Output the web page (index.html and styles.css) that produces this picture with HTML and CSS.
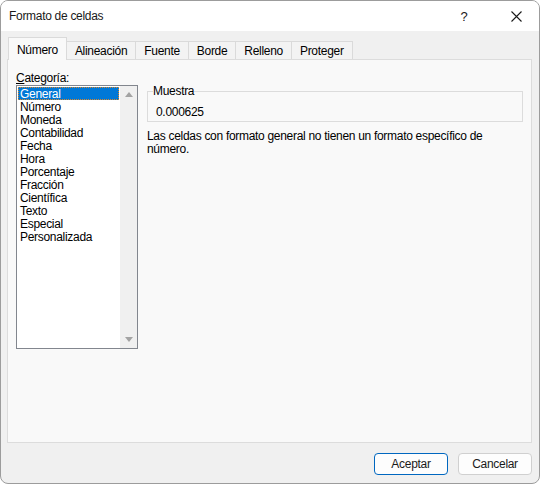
FILE: index.html
```html
<!DOCTYPE html>
<html lang="es">
<head>
<meta charset="utf-8">
<title>Formato de celdas</title>
<link rel="stylesheet" href="styles.css">
</head>
<body>
<div class="window">
  <div class="titlebar">
    <span class="title">Formato de celdas</span>
    <span class="help">?</span>
    <span class="close">
      <svg width="11" height="11" viewBox="0 0 11 11"><path d="M0.5 0.5L10.5 10.5M10.5 0.5L0.5 10.5" stroke="#1a1a1a" stroke-width="1.1" fill="none"/></svg>
    </span>
  </div>
  <div class="content">
    <div class="tabs">
      <div class="tab active">Número</div>
      <div class="tab">Alineación</div>
      <div class="tab">Fuente</div>
      <div class="tab">Borde</div>
      <div class="tab">Relleno</div>
      <div class="tab">Proteger</div>
    </div>
    <div class="panel">
      <div class="leftcol">
        <div class="label"><u>C</u>ategoría:</div>
        <div class="listbox">
          <ul class="items">
            <li class="item selected">General</li>
            <li class="item">Número</li>
            <li class="item">Moneda</li>
            <li class="item">Contabilidad</li>
            <li class="item">Fecha</li>
            <li class="item">Hora</li>
            <li class="item">Porcentaje</li>
            <li class="item">Fracción</li>
            <li class="item">Científica</li>
            <li class="item">Texto</li>
            <li class="item">Especial</li>
            <li class="item">Personalizada</li>
          </ul>
          <div class="scrollbar">
            <span class="arrow up"></span>
            <span class="arrow down"></span>
          </div>
        </div>
      </div>
      <div class="rightcol">
        <fieldset class="sample">
          <legend>Muestra</legend>
          <div class="value">0.000625</div>
        </fieldset>
        <p class="desc">Las celdas con formato general no tienen un formato específico de número.</p>
      </div>
    </div>
    <div class="buttons">
      <button class="btn primary">Aceptar</button>
      <button class="btn">Cancelar</button>
    </div>
  </div>
</div>
</body>
</html>
```

FILE: styles.css
```css
html, body {
  margin: 0;
  padding: 0;
  background: #ffffff;
}
body {
  font-family: "Liberation Sans", Arial, sans-serif;
  font-size: 12px;
  letter-spacing: -0.3px;
  color: #000;
}
.window {
  width: 540px;
  height: 484px;
  box-sizing: border-box;
  border: 1px solid #9c9c9c;
  border-radius: 8px;
  overflow: hidden;
  background: #f0f0f0;
  display: flex;
  flex-direction: column;
}
.titlebar {
  height: 30px;
  flex: none;
  background: #ffffff;
  display: flex;
  align-items: center;
  padding-left: 8px;
}
.title {
  flex: 1;
  color: #1a1a1a;
  font-size: 12px;
}
.help {
  width: 20px;
  text-align: center;
  font-size: 13px;
  color: #1a1a1a;
  margin-right: 19px;
}
.close {
  width: 46px;
  height: 30px;
  display: flex;
  align-items: center;
  justify-content: center;
}
.content {
  flex: 1;
  display: flex;
  flex-direction: column;
  padding: 0 7px 0 6px;
}
.tabs {
  height: 28px;
  display: flex;
  align-items: flex-end;
  padding-left: 1px;
  position: relative;
  z-index: 1;
}
.tab {
  height: 17px;
  line-height: 19px;
  padding: 0 8px;
  border: 1px solid #dadada;
  border-bottom: none;
  background: #f3f3f3;
  margin-left: -1px;
  color: #000;
}
.tab:first-child {
  margin-left: 0;
}
.tab.active {
  height: 22px;
  line-height: 25px;
  background: #f9f9f9;
  margin-bottom: -1px;
  position: relative;
  z-index: 2;
}
.panel {
  height: 384px;
  box-sizing: border-box;
  border: 1px solid #dcdcdc;
  background: #f9f9f9;
  display: flex;
  padding: 11px 8px 0 8px;
}
.leftcol {
  width: 122px;
  flex: none;
}
.label {
  line-height: 14px;
  height: 13px;
  margin-bottom: 1px;
}
.listbox {
  width: 122px;
  height: 264px;
  box-sizing: border-box;
  border: 1px solid #82868e;
  background: #ffffff;
  display: flex;
}
.items {
  list-style: none;
  margin: 0;
  padding: 1px;
  flex: 1;
}
.item {
  line-height: 15px;
  height: 13px;
  padding-left: 2px;
  white-space: nowrap;
}
.item.selected {
  background: #0078d7;
  color: #ffffff;
  outline: 1px dotted #d9862a;
  outline-offset: -1px;
}
.scrollbar {
  width: 17px;
  flex: none;
  background: #f0f0f0;
  display: flex;
  flex-direction: column;
  justify-content: space-between;
  align-items: center;
  padding: 6px 0 6px 0;
}
.arrow {
  width: 0;
  height: 0;
  border-left: 4.5px solid transparent;
  border-right: 4.5px solid transparent;
}
.arrow.up {
  border-bottom: 5px solid #a3a3a3;
}
.arrow.down {
  border-top: 5px solid #a3a3a3;
}
.rightcol {
  flex: 1;
  margin-left: 9px;
  margin-top: 14px;
}
.sample {
  margin: 0;
  padding: 0 5px 2px 5px;
  border: 1px solid #dcdcdc;
  width: 376px;
  box-sizing: border-box;
}
.sample legend {
  padding: 0;
  line-height: 13px;
}
.value {
  line-height: 13px;
  margin: 8px 0 0 3px;
}
.desc {
  margin: 8px 0 0 0;
  line-height: 13px;
  width: 376px;
}
.buttons {
  display: flex;
  justify-content: flex-end;
  gap: 10px;
  margin-top: 10px;
}
.btn {
  width: 74px;
  height: 22px;
  box-sizing: border-box;
  border: 1px solid #d0d0d0;
  border-radius: 4px;
  background: #fdfdfd;
  font-family: "Liberation Sans", Arial, sans-serif;
  font-size: 12px;
  letter-spacing: -0.3px;
  color: #1a1a1a;
  padding: 0;
}
.btn.primary {
  border-color: #0067c0;
}
```
